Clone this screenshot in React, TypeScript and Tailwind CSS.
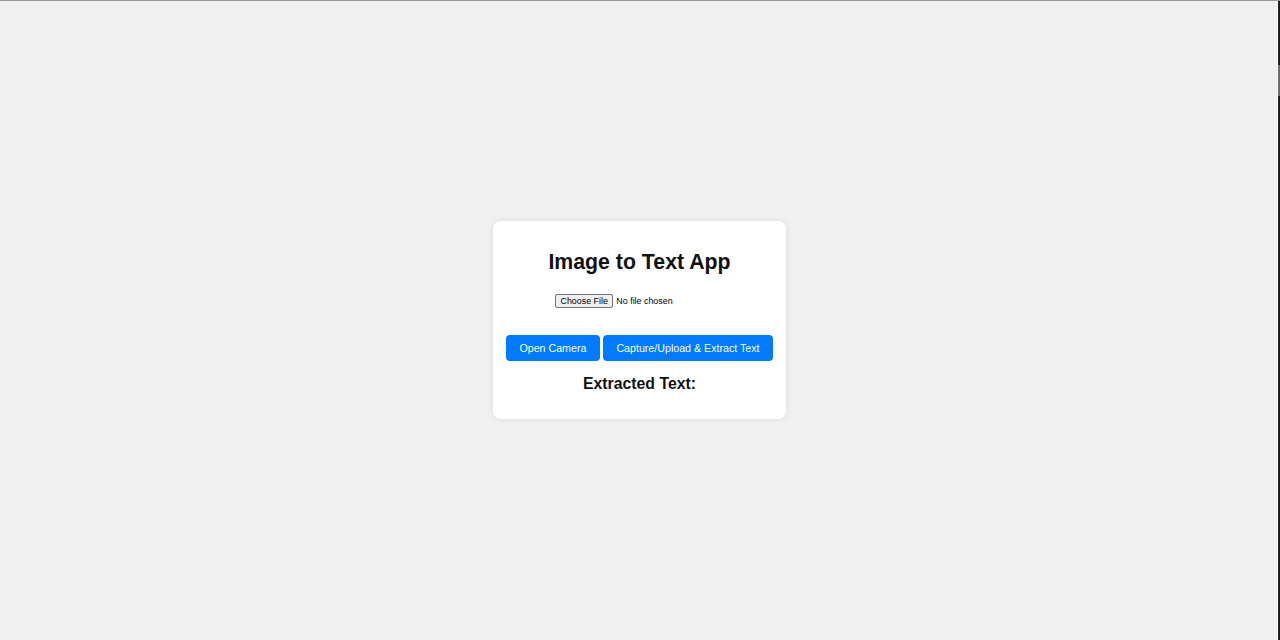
export default function App() {
  return (
    <div className="flex h-[640px] w-full flex-col bg-[#f0f0f0] font-['Liberation_Sans',Arial,sans-serif]">
      <div className="h-px w-full bg-[#9a9a9a]" />
      <div className="flex flex-1">
        <main className="flex flex-1 items-start justify-center pt-[220px] pl-[2px]">
          <div className="w-[293px] rounded-lg bg-white px-3 pt-[29px] pb-[26px] text-center shadow-[0_0_8px_rgba(0,0,0,0.08)]">
            <h2 className="text-[21.3px] leading-[24px] font-bold text-[#111]">Image to Text App</h2>

            <div className="mt-[20px] flex justify-center">
              <div className="flex w-[169px] items-center gap-[3px] text-[8.9px] leading-none text-black">
                <span className="flex h-[14px] items-center rounded-[2px] border border-[#767676] bg-[#efefef] px-[4.5px]">
                  Choose File
                </span>
                <span>No file chosen</span>
              </div>
            </div>

            <div className="mt-[27px] flex justify-center gap-[3px]">
              <button className="h-[26px] rounded-[4px] bg-[#007bff] px-[13.5px] text-[10.67px] text-white">
                Open Camera
              </button>
              <button className="h-[26px] rounded-[4px] bg-[#007bff] px-[13.5px] text-[10.67px] text-white">
                Capture/Upload &amp; Extract Text
              </button>
            </div>

            <h3 className="mt-[14px] text-[15.8px] leading-[18px] font-bold text-[#111]">Extracted Text:</h3>
          </div>
        </main>
        <div className="flex w-[3px]">
          <div className="w-px bg-white" />
          <div className="flex w-[2px] flex-col bg-[#1e1e1e]">
            <div className="mt-[64px] h-[31px] bg-[#6b6b6b]" />
          </div>
        </div>
      </div>
    </div>
  );
}
